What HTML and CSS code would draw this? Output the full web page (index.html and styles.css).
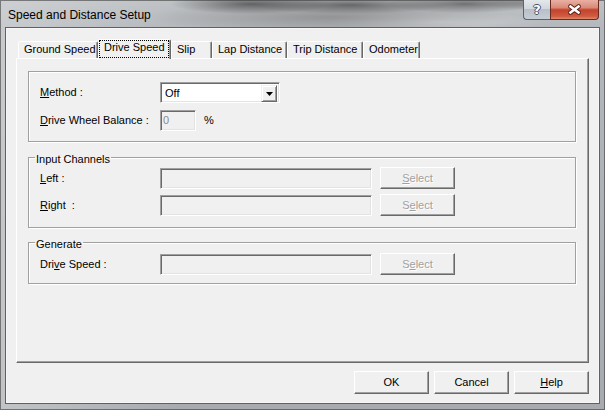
FILE: index.html
```html
<!DOCTYPE html>
<html lang="en">
<head>
<meta charset="utf-8">
<title>Speed and Distance Setup</title>
<link rel="stylesheet" href="styles.css">
</head>
<body>
<div class="window">
  <div class="titlebar">
    <span class="title">Speed and Distance Setup</span>
    <div class="caption-buttons">
      <div class="cap-btn help-btn">?</div>
      <div class="cap-btn close-btn">
        <svg width="15" height="11" viewBox="0 0 15 11">
          <path d="M3.5 2.5 L11.5 8.5 M11.5 2.5 L3.5 8.5" stroke="#5a2016" stroke-width="4.6" stroke-linecap="round" fill="none"/>
          <path d="M3.5 2.5 L11.5 8.5 M11.5 2.5 L3.5 8.5" stroke="#ffffff" stroke-width="2.6" stroke-linecap="square" fill="none"/>
        </svg>
      </div>
    </div>
  </div>
  <div class="client">
    <div class="tabs">
      <div class="tab w-ground">Ground Speed</div>
      <div class="tab selected w-drive"><span class="focus">Drive Speed</span></div>
      <div class="tab w-slip">Slip</div>
      <div class="tab w-lap">Lap Distance</div>
      <div class="tab w-trip">Trip Distance</div>
      <div class="tab w-odo">Odometer</div>
    </div>
    <div class="page">
      <div class="box method-box">
        <div class="grid grid-method">
          <span class="label"><u>M</u>ethod :</span>
          <div class="combo">
            <span class="combo-text">Off</span>
            <span class="combo-btn">
              <svg width="7" height="4" viewBox="0 0 7 4"><polygon points="0,0 7,0 3.5,4" fill="#000"/></svg>
            </span>
          </div>
          <span class="label"><u>D</u>rive Wheel Balance :</span>
          <div class="with-unit">
            <div class="field field-small">0</div>
            <span class="unit">%</span>
          </div>
        </div>
      </div>
      <fieldset class="group group-input">
        <legend>Input Channels</legend>
        <div class="grid grid-select">
          <span class="label"><u>L</u>eft :</span>
          <div class="field field-wide"></div>
          <button class="btn btn-select" disabled><u>S</u>elect</button>
          <span class="label"><u>R</u>ight &nbsp;:</span>
          <div class="field field-wide"></div>
          <button class="btn btn-select" disabled>S<u>e</u>lect</button>
        </div>
      </fieldset>
      <fieldset class="group group-generate">
        <legend>Generate</legend>
        <div class="grid grid-select">
          <span class="label">Dri<u>v</u>e Speed :</span>
          <div class="field field-wide"></div>
          <button class="btn btn-select" disabled>S<u>e</u>lect</button>
        </div>
      </fieldset>
    </div>
    <div class="dialog-buttons">
      <button class="btn btn-dialog">OK</button>
      <button class="btn btn-dialog">Cancel</button>
      <button class="btn btn-dialog"><u>H</u>elp</button>
    </div>
  </div>
</div>
</body>
</html>
```

FILE: styles.css
```css
* {
  box-sizing: border-box;
}

html,
body {
  margin: 0;
  padding: 0;
}

body {
  width: 605px;
  height: 410px;
  overflow: hidden;
  font-family: "Liberation Sans", Arial, sans-serif;
  font-size: 11px;
  color: #000;
  background: #aeb1b5;
}

.window {
  width: 605px;
  height: 410px;
  display: flex;
  flex-direction: column;
  padding: 0 7px 8px 7px;
  background:
    radial-gradient(80px 10px at 250px 4px, rgba(50, 50, 50, 0.65), rgba(50, 50, 50, 0)),
    radial-gradient(100px 9px at 350px 5px, rgba(50, 50, 50, 0.6), rgba(50, 50, 50, 0)),
    radial-gradient(80px 9px at 465px 4px, rgba(60, 60, 60, 0.6), rgba(60, 60, 60, 0)),
    radial-gradient(60px 7px at 540px 3px, rgba(60, 60, 60, 0.4), rgba(60, 60, 60, 0)),
    radial-gradient(180px 16px at 330px 17px, rgba(100, 100, 100, 0.45), rgba(100, 100, 100, 0)),
    radial-gradient(110px 10px at 440px 22px, rgba(255, 255, 255, 0.3), rgba(255, 255, 255, 0)),
    linear-gradient(90deg, rgba(220, 222, 225, 0.5) 0, rgba(220, 222, 225, 0) 180px),
    linear-gradient(180deg, #bfc2c5 0, #b4b7bb 28px, #a7aaae 100%);
  box-shadow: inset 0 0 0 1px rgba(50, 50, 50, 0.55);
}

/* Title bar */
.titlebar {
  height: 29px;
  flex: none;
  display: flex;
  align-items: flex-start;
  margin-right: -1px;
  padding-left: 1px;
}

.title {
  font-size: 12px;
  line-height: 15px;
  padding-top: 8px;
  color: #000;
}

.caption-buttons {
  margin-left: auto;
  display: flex;
}

.cap-btn {
  height: 20px;
  display: flex;
  align-items: center;
  justify-content: center;
  border: 1px solid;
  border-top: 0;
}

.help-btn {
  width: 27px;
  border-color: #5c636d;
  border-right: 0;
  border-radius: 0 0 0 4px;
  background: linear-gradient(180deg, #e4e8ed 0, #d2d7de 45%, #b8bfc8 50%, #c7cdd5 100%);
  color: #fff;
  font-weight: bold;
  font-size: 13px;
  font-family: "DejaVu Sans", sans-serif;
  line-height: 14px;
  text-shadow: 1px 0 0 #4a525c, -1px 0 0 #4a525c, 0 1px 0 #4a525c, 0 -1px 0 #4a525c;
}

.close-btn {
  width: 49px;
  border-color: #6b2a20;
  border-radius: 0 0 4px 0;
  background: linear-gradient(180deg, #e9b0a2 0, #d98a78 40%, #c4432e 52%, #cf5a40 85%, #e08a6a 100%);
}

/* Client area */
.client {
  flex: 1;
  display: flex;
  flex-direction: column;
  background: #f0f0f0;
  padding: 10px 9px 8px 9px;
  box-shadow: 0 0 0 1px #f6f6f6, 0 0 0 2px #5e6064;
}

/* Tabs */
.tabs {
  height: 19px;
  flex: none;
  display: flex;
  align-items: flex-end;
  margin-left: 2px;
  position: relative;
  z-index: 1;
}

.tab {
  height: 17px;
  border: 1px solid;
  border-bottom: 0;
  border-color: #fff #696969 transparent #fff;
  border-radius: 2px 2px 0 0;
  box-shadow: inset -1px 0 0 #a0a0a0;
  padding: 1px 0 0 5px;
  line-height: 13px;
  white-space: nowrap;
  background: #f0f0f0;
}

.tab.selected {
  height: 20px;
  margin-bottom: -1px;
  padding: 0 1px 0 0;
}

.focus {
  display: block;
  height: 18px;
  border: 1px dotted #000;
  padding: 0 0 0 4px;
  line-height: 13px;
}

.w-ground { width: 80px; }
.w-drive { width: 73px; }
.w-slip { width: 41px; }
.w-lap { width: 75px; }
.w-trip { width: 76px; }
.w-odo { width: 57px; }

/* Tab page */
.page {
  height: 305px;
  flex: none;
  border: 1px solid;
  border-color: #fff #696969 #696969 #fff;
  box-shadow: inset -1px -1px 0 #a0a0a0;
  padding: 12px 12px 0 11px;
}

.box,
.group {
  border: 1px solid #a0a0a0;
  box-shadow: inset 1px 1px 0 #fff, 1px 1px 0 #fff;
}

.method-box {
  padding: 10px 0 10px 11px;
}

.group {
  margin: 0;
  min-width: 0;
  padding: 3px 0 11px 11px;
}

.group-input {
  margin-top: 9px;
}

.group-generate {
  margin-top: 8px;
  padding-top: 4px;
  padding-bottom: 8px;
}

legend {
  padding: 4px 1px 0 1px;
  margin-left: -5px;
  line-height: 9px;
}

.grid {
  display: grid;
  column-gap: 8px;
}

.grid-method {
  grid-template-columns: 112px 120px;
  justify-content: start;
  grid-auto-rows: 21px;
  row-gap: 7px;
  align-items: center;
}

.grid-select {
  grid-template-columns: 112px 212px 75px;
  grid-auto-rows: 22px;
  row-gap: 5px;
  align-items: end;
}

.label {
  align-self: center;
  white-space: nowrap;
  line-height: 13px;
}

.with-unit {
  display: flex;
  align-items: center;
  gap: 8px;
}

/* Controls */
.combo {
  width: 120px;
  height: 21px;
  display: flex;
  background: #fff;
  border: 1px solid;
  border-color: #a0a0a0 #fff #fff #a0a0a0;
  box-shadow: inset 1px 1px 0 #696969, inset -1px -1px 0 #e3e3e3;
  padding: 2px;
}

.combo-text {
  flex: 1;
  padding-left: 2px;
  line-height: 16px;
}

.combo-btn {
  width: 16px;
  height: 17px;
  display: flex;
  align-items: center;
  justify-content: center;
  background: #f0f0f0;
  border: 1px solid;
  border-color: #f0f0f0 #696969 #696969 #f0f0f0;
  box-shadow: inset 1px 1px 0 #fff, inset -1px -1px 0 #a0a0a0;
}

.field {
  height: 21px;
  background: #f0f0f0;
  border: 1px solid;
  border-color: #a0a0a0 #fff #fff #a0a0a0;
  box-shadow: inset 1px 1px 0 #696969, inset -1px -1px 0 #e3e3e3;
  padding: 2px 0 0 2px;
  line-height: 15px;
  color: #8a8a8a;
}

.field-small {
  width: 36px;
}

.field-wide {
  width: 212px;
}

.unit {
  line-height: 13px;
}

.btn {
  font-family: "Liberation Sans", Arial, sans-serif;
  font-size: 11px;
  color: #000;
  background: #f0f0f0;
  border: 1px solid;
  border-color: #fff #696969 #696969 #fff;
  box-shadow: inset -1px -1px 0 #a0a0a0;
  border-radius: 0;
  padding: 0;
  margin: 0;
  text-align: center;
  line-height: 13px;
}

.btn-select {
  width: 75px;
  height: 22px;
  color: #a0a0a0;
  text-shadow: 1px 1px 0 #fff;
}

.dialog-buttons {
  display: flex;
  justify-content: flex-end;
  gap: 5px;
  margin-top: 8px;
}

.btn-dialog {
  width: 75px;
  height: 23px;
}
```
